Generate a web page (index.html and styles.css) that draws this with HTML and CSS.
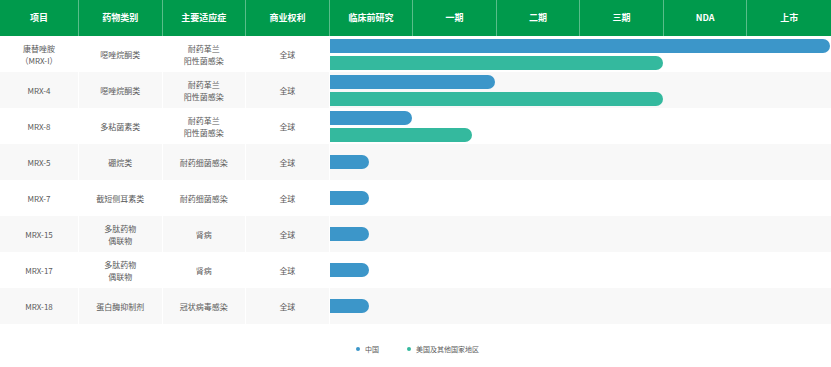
FILE: index.html
```html
<!DOCTYPE html>
<html lang="zh-CN">
<head>
  <meta charset="UTF-8" />
  <title>研发管线</title>
  <link rel="stylesheet" href="styles.css">
</head>
<body>
  <div class="pipeline">
    <div class="row head">
      <div class="cell">项目</div>
      <div class="cell">药物类别</div>
      <div class="cell">主要适应症</div>
      <div class="cell">商业权利</div>
      <div class="cell">临床前研究</div>
      <div class="cell">一期</div>
      <div class="cell">二期</div>
      <div class="cell">三期</div>
      <div class="cell">NDA</div>
      <div class="cell last">上市</div>
    </div>

    <div class="row">
      <div class="cell">康替唑胺<br>（MRX-I）</div>
      <div class="cell">噁唑烷酮类</div>
      <div class="cell">耐药革兰<br>阳性菌感染</div>
      <div class="cell">全球</div>
      <div class="track">
        <div class="bar cn" style="width: 99.8%"></div>
        <div class="bar us" style="width: 66.5%"></div>
      </div>
    </div>

    <div class="row alt">
      <div class="cell">MRX-4</div>
      <div class="cell">噁唑烷酮类</div>
      <div class="cell">耐药革兰<br>阳性菌感染</div>
      <div class="cell">全球</div>
      <div class="track">
        <div class="bar cn" style="width: 33%"></div>
        <div class="bar us" style="width: 66.5%"></div>
      </div>
    </div>

    <div class="row">
      <div class="cell">MRX-8</div>
      <div class="cell">多粘菌素类</div>
      <div class="cell">耐药革兰<br>阳性菌感染</div>
      <div class="cell">全球</div>
      <div class="track">
        <div class="bar cn" style="width: 16.5%"></div>
        <div class="bar us" style="width: 28.3%"></div>
      </div>
    </div>

    <div class="row alt">
      <div class="cell">MRX-5</div>
      <div class="cell">硼烷类</div>
      <div class="cell">耐药细菌感染</div>
      <div class="cell">全球</div>
      <div class="track">
        <div class="bar cn" style="width: 7.8%"></div>
      </div>
    </div>

    <div class="row">
      <div class="cell">MRX-7</div>
      <div class="cell">截短侧耳素类</div>
      <div class="cell">耐药细菌感染</div>
      <div class="cell">全球</div>
      <div class="track">
        <div class="bar cn" style="width: 7.8%"></div>
      </div>
    </div>

    <div class="row alt">
      <div class="cell">MRX-15</div>
      <div class="cell">多肽药物<br>偶联物</div>
      <div class="cell">肾病</div>
      <div class="cell">全球</div>
      <div class="track">
        <div class="bar cn" style="width: 7.8%"></div>
      </div>
    </div>

    <div class="row">
      <div class="cell">MRX-17</div>
      <div class="cell">多肽药物<br>偶联物</div>
      <div class="cell">肾病</div>
      <div class="cell">全球</div>
      <div class="track">
        <div class="bar cn" style="width: 7.8%"></div>
      </div>
    </div>

    <div class="row alt">
      <div class="cell">MRX-18</div>
      <div class="cell">蛋白酶抑制剂</div>
      <div class="cell">冠状病毒感染</div>
      <div class="cell">全球</div>
      <div class="track">
        <div class="bar cn" style="width: 7.8%"></div>
      </div>
    </div>
  </div>

  <div class="legend">
    <span class="key"><i class="dot cn"></i>中国</span>
    <span class="key"><i class="dot us"></i>美国及其他国家地区</span>
  </div>
</body>
</html>
```

FILE: styles.css
```css
html, body {
  margin: 0;
  padding: 0;
  background: #fff;
  font-family: "Noto Sans CJK SC", "Noto Sans", sans-serif;
  color: #5a5a5a;
}

.pipeline {
  width: 831px;
}

.row {
  display: grid;
  grid-template-columns: 79px repeat(9, minmax(0, 1fr));
  height: 36px;
  background: #fff;
}

.row.alt {
  background: #f8f8f8;
}

.cell {
  display: flex;
  align-items: center;
  justify-content: center;
  text-align: center;
  font-size: 8px;
  line-height: 12px;
  padding-top: 2px;
  border-right: 1px solid #fff;
}

.head {
  background: #009a4c;
}

.head .cell {
  color: #fff;
  font-size: 9px;
  font-weight: bold;
  padding-top: 0;
  border-right: 1px solid rgba(255, 255, 255, 0.35);
}

.head .cell.last {
  border-right: none;
}

.track {
  grid-column: 5 / span 6;
  display: flex;
  flex-direction: column;
  justify-content: center;
  gap: 3px;
}

.bar {
  height: 14px;
  border-radius: 0 7px 7px 0;
}

.cn {
  background: #3c96c9;
}

.us {
  background: #34b99e;
}

.legend {
  display: flex;
  justify-content: center;
  gap: 28px;
  padding-top: 20px;
  padding-left: 4px;
  font-size: 7px;
  line-height: 10px;
}

.key {
  display: flex;
  align-items: center;
  gap: 5px;
}

.dot {
  width: 4px;
  height: 4px;
  border-radius: 50%;
}
```
